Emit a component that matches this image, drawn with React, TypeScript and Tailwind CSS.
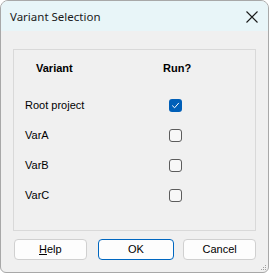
import React from "react";

const Check = ({ checked }: { checked: boolean }) =>
  checked ? (
    <div className="w-[13px] h-[13px] rounded-[3px] bg-[#005fb8] flex items-center justify-center">
      <svg width="9" height="9" viewBox="0 0 9 9" fill="none">
        <path d="M1.5 4.8 L3.6 6.8 L7.6 2.2" stroke="#ffffff" strokeWidth="1" strokeLinecap="round" strokeLinejoin="round" />
      </svg>
    </div>
  ) : (
    <div className="w-[13px] h-[13px] rounded-[3px] border border-[#5c5c5c] bg-[#f7f7f7]" />
  );

const rows: [string, boolean][] = [
  ["Root project", true],
  ["VarA", false],
  ["VarB", false],
  ["VarC", false],
];

export default function App() {
  const body = { fontFamily: '"Liberation Sans", Arial, sans-serif' };
  return (
    <div className="w-[270px] h-[274px] bg-white">
      <div
        className="w-[269px] h-[273px] border border-[#a8a8a8] rounded-t-[8px] rounded-b-[6px] bg-[#f0f0f0] flex flex-col overflow-hidden relative"
        style={body}
      >
        <div className="h-[30px] bg-[#e8f5f8] flex items-center justify-between pl-[9px] pr-[9px] shrink-0">
          <span
            className="text-[11.5px] text-[#1a1a1a] mt-[1px]"
            style={{ fontFamily: '"Noto Sans", "Open Sans", sans-serif' }}
          >
            Variant Selection
          </span>
          <svg width="12" height="12" viewBox="0 0 12 12" className="mt-[1px] mr-[1px]">
            <path d="M0.5 0.5 L11.5 11.5 M11.5 0.5 L0.5 11.5" stroke="#1a1a1a" strokeWidth="1.1" />
          </svg>
        </div>
        <div className="px-[12px] pt-[18px] flex flex-col">
          <div className="h-[182px] border border-[#d9d9d9] flex flex-col pt-[3px]">
            <div className="h-[30px] flex items-center text-[11px] font-bold text-black">
              <span className="w-[149px] pl-[22px]">Variant</span>
              <span className="">Run?</span>
            </div>
            <div className="mt-[7px] flex flex-col">
              {rows.map(([name, c]) => (
                <div key={name} className="h-[30px] flex items-center text-[11px] text-black">
                  <span className="w-[155px] pl-[11px]">{name}</span>
                  <Check checked={c} />
                </div>
              ))}
            </div>
          </div>
          <div className="flex mt-[8px] text-[11px] text-black">
            <button className="w-[73px] h-[21px] rounded-[4px] border border-[#d0d0d0] bg-[#fdfdfd] flex items-center justify-center ml-[1px]">
              <span>
                <span className="underline">H</span>elp
              </span>
            </button>
            <button className="w-[77px] h-[21px] rounded-[4px] border border-[#0067c0] bg-[#fdfdfd] flex items-center justify-center ml-[11px]">
              OK
            </button>
            <button className="w-[73px] h-[21px] rounded-[4px] border border-[#d0d0d0] bg-[#fdfdfd] flex items-center justify-center ml-[9px]">
              Cancel
            </button>
          </div>
        </div>
        <svg width="6" height="6" viewBox="0 0 6 6" className="absolute right-[1px] bottom-[1px]">
          <rect x="4" y="0" width="1" height="1" fill="#a0a0a0" />
          <rect x="2" y="2" width="1" height="1" fill="#a0a0a0" />
          <rect x="4" y="2" width="1" height="1" fill="#a0a0a0" />
          <rect x="0" y="4" width="1" height="1" fill="#a0a0a0" />
          <rect x="2" y="4" width="1" height="1" fill="#a0a0a0" />
          <rect x="4" y="4" width="1" height="1" fill="#a0a0a0" />
        </svg>
      </div>
    </div>
  );
}
